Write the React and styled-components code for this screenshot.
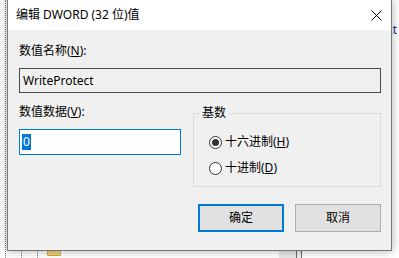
import React from 'react';
import styled, { createGlobalStyle } from 'styled-components';

const GlobalStyle = createGlobalStyle`
  html, body {
    margin: 0;
    padding: 0;
  }
  body {
    background: #fff;
    font-family: "Noto Sans", "Noto Sans CJK SC", sans-serif;
    font-size: 12px;
    color: #000;
  }
`;

const Desktop = styled.div`
  position: relative;
  width: 399px;
  height: 258px;
  overflow: hidden;
  background: #fff;
`;

// regedit window that sits behind the dialog
const Backdrop = styled.div`
  display: flex;
  height: 100%;
`;

const TreePane = styled.div`
  flex: 0 0 279px;
  display: flex;
  padding-left: 5px;
  box-sizing: border-box;
`;

const Guide = styled.div`
  flex: 0 0 ${p => p.$w}px;
  border-left: 1px dotted #7a7a7a;
  box-sizing: border-box;
`;

const FolderColumn = styled.div`
  display: flex;
  flex-direction: column;
  padding-top: 13px;
`;

const FolderRow = styled.div`
  height: 16px;
  display: flex;
  align-items: flex-start;
  padding-top: 3px;
  box-sizing: border-box;
`;

const Folder = styled.div`
  width: 14px;
  height: 10px;
  box-sizing: border-box;
  background: #f3d37a;
  border: 1px solid #d9a93c;
  border-radius: 1px;
`;

const Scrollbar = styled.div`
  flex: 0 0 17px;
  background: #e9e9e9;
`;

const Splitter = styled.div`
  flex: 0 0 6px;
  box-sizing: border-box;
  border-left: 1px solid #6a6a6a;
  border-right: 1px solid #6a6a6a;
  background: #f0f0f0;
`;

const ValuePane = styled.div`
  flex: 1;
  padding-top: 23px;
`;

const ValueRow = styled.div`
  line-height: 14px;
  text-align: right;
  padding-right: 2px;
  color: #1a3a8a;
  white-space: nowrap;
`;

// the dialog window
const Dialog = styled.div`
  position: absolute;
  left: 7px;
  top: -1px;
  width: 385px;
  height: 252px;
  box-sizing: border-box;
  border: 1px solid #767676;
  background: #f0f0f0;
  box-shadow: 0 0 9px rgba(0, 0, 0, 0.32);
  display: flex;
  flex-direction: column;
`;

const TitleBar = styled.div`
  height: 30px;
  flex: 0 0 30px;
  background: #fff;
  display: flex;
  align-items: center;
  padding: 0 9px 0 8px;
`;

const Title = styled.span`
  line-height: 16px;
`;

const Close = styled.svg`
  margin-left: auto;
  width: 11px;
  height: 11px;
`;

const Body = styled.div`
  display: flex;
  flex-direction: column;
  padding: 13px 10px 0 11px;
`;

const Label = styled.div`
  line-height: 16px;
  height: 16px;
  white-space: nowrap;
`;

const NameBox = styled.div`
  margin-top: 9px;
  height: 25px;
  box-sizing: border-box;
  border: 1px solid #4a4a4a;
  background: #f0f0f0;
  padding-left: 3px;
  display: flex;
  align-items: center;
`;

const DataRow = styled.div`
  margin-top: 11px;
  display: grid;
  grid-template-columns: 162px 1fr;
  column-gap: 12px;
  align-items: start;
`;

const DataColumn = styled.div`
  display: flex;
  flex-direction: column;
`;

const ValueInput = styled.div`
  margin-top: 9px;
  height: 26px;
  box-sizing: border-box;
  border: 1px solid #0078d7;
  background: #fff;
  padding-left: 2px;
  display: flex;
  align-items: center;
`;

const Selected = styled.span`
  background: #0078d7;
  color: #fff;
  line-height: 16px;
  padding: 0 1px;
`;

const Group = styled.fieldset`
  margin: 1px 0 0;
  padding: 0 6px;
  height: 82px;
  box-sizing: border-box;
  border: 1px solid #dcdcdc;
  min-width: 0;
`;

const Legend = styled.legend`
  padding: 0 2px;
  line-height: 16px;
`;

const RadioList = styled.div`
  display: flex;
  flex-direction: column;
  padding: 8px 0 0 9px;
`;

const RadioRow = styled.div`
  height: 26px;
  display: flex;
  align-items: center;
  gap: 3px;
  line-height: 16px;
`;

const RadioCircle = styled.span`
  width: 13px;
  height: 13px;
  box-sizing: border-box;
  border-radius: 50%;
  border: 1px solid #333;
  background: #fff;
  display: flex;
  align-items: center;
  justify-content: center;

  &::after {
    content: '';
    width: 7px;
    height: 7px;
    border-radius: 50%;
    background: ${p => (p.$checked ? '#333' : 'transparent')};
  }
`;

const ButtonRow = styled.div`
  margin-top: 17px;
  display: flex;
  justify-content: flex-end;
  gap: 11px;
`;

const Button = styled.div`
  width: 86px;
  height: 28px;
  box-sizing: border-box;
  background: #e1e1e1;
  border: ${p => (p.$default ? '2px solid #0078d7' : '1px solid #adadad')};
  display: flex;
  align-items: center;
  justify-content: center;
  line-height: 16px;
`;

function App() {
  return (
    <Desktop>
      <GlobalStyle />
      <Backdrop>
        <TreePane>
          <Guide $w={16} />
          <Guide $w={16} />
          <Guide $w={10} />
          <FolderColumn>
            {Array.from({ length: 16 }).map((_, i) => (
              <FolderRow key={i}>
                <Folder />
              </FolderRow>
            ))}
          </FolderColumn>
        </TreePane>
        <Scrollbar />
        <Splitter />
        <ValuePane>
          <ValueRow>WriteProtect</ValueRow>
        </ValuePane>
      </Backdrop>

      <Dialog>
        <TitleBar>
          <Title>编辑 DWORD (32 位)值</Title>
          <Close viewBox="0 0 11 11">
            <path d="M0.5 0.5 L10.5 10.5 M10.5 0.5 L0.5 10.5" stroke="#000" strokeWidth="1" fill="none" />
          </Close>
        </TitleBar>
        <Body>
          <Label>数值名称(<u>N</u>):</Label>
          <NameBox>WriteProtect</NameBox>
          <DataRow>
            <DataColumn>
              <Label>数值数据(<u>V</u>):</Label>
              <ValueInput>
                <Selected>0</Selected>
              </ValueInput>
            </DataColumn>
            <Group>
              <Legend>基数</Legend>
              <RadioList>
                <RadioRow>
                  <RadioCircle $checked />
                  <span>十六进制(<u>H</u>)</span>
                </RadioRow>
                <RadioRow>
                  <RadioCircle />
                  <span>十进制(<u>D</u>)</span>
                </RadioRow>
              </RadioList>
            </Group>
          </DataRow>
          <ButtonRow>
            <Button $default>确定</Button>
            <Button>取消</Button>
          </ButtonRow>
        </Body>
      </Dialog>
    </Desktop>
  );
}

export default App;
